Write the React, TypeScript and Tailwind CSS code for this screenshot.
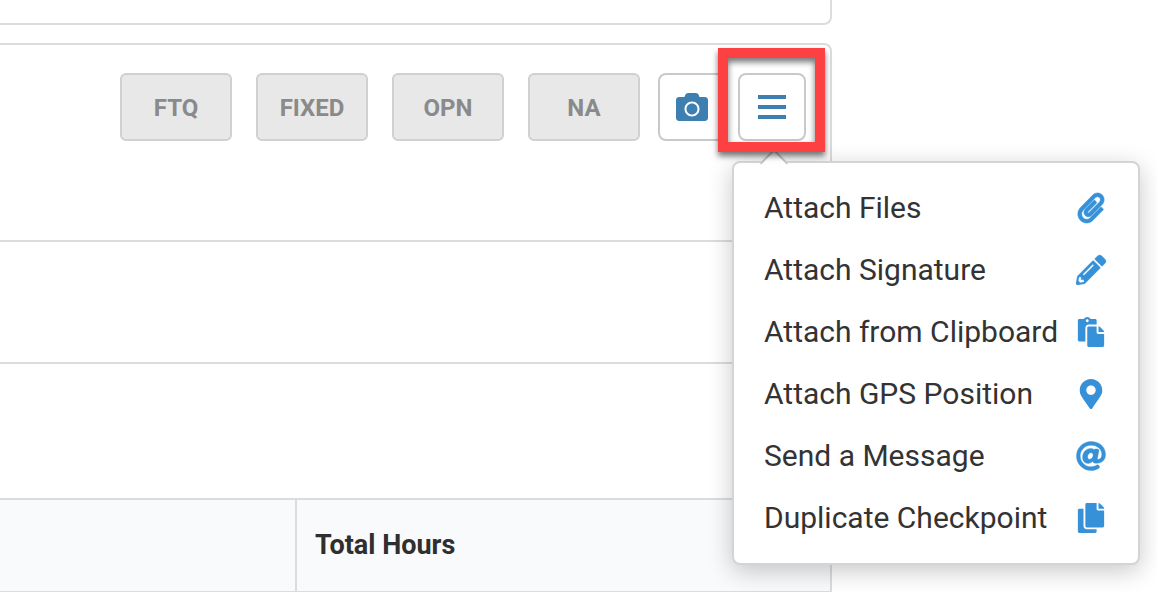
import React, { useState } from 'react';
import type { IconType } from 'react-icons';
import {
  FaAt,
  FaCamera,
  FaCopy,
  FaMapMarkerAlt,
  FaPaperclip,
  FaPaste,
  FaPencilAlt
} from 'react-icons/fa';

interface MenuItem {
  label: string;
  icon: IconType;
  weight: number;
}

const statuses = ['FTQ', 'FIXED', 'OPN', 'NA'];

// weight is the outline added round the glyph, in its own viewBox units
const menuItems: MenuItem[] = [
  { label: 'Attach Files', icon: FaPaperclip, weight: 10 },
  { label: 'Attach Signature', icon: FaPencilAlt, weight: 4 },
  { label: 'Attach from Clipboard', icon: FaPaste, weight: 0 },
  { label: 'Attach GPS Position', icon: FaMapMarkerAlt, weight: 0 },
  { label: 'Send a Message', icon: FaAt, weight: 6 },
  { label: 'Duplicate Checkpoint', icon: FaCopy, weight: 0 }
];

const BarsIcon: React.FC = () => (
  <svg viewBox="0 0 28 24" className="h-6 w-7 text-[#3d7fb0]" fill="currentColor" aria-hidden="true">
    <rect y="0" width="28" height="4" />
    <rect y="10" width="28" height="4" />
    <rect y="20" width="28" height="4" />
  </svg>
);

const ActionsMenu: React.FC = () => (
  <div
    role="menu"
    className="absolute -left-1.5 top-[88px] z-10 w-[408px] rounded-lg border-2 border-[#d3d4d5] bg-white pb-[15px] pt-[13px] shadow-[0_6px_24px_rgba(0,0,0,0.22)]"
  >
    {/* Arrow */}
    <div className="absolute -top-2.5 left-[30px] h-5 w-5 rotate-45 border-l-2 border-t-2 border-[#c4c4c4] bg-white"></div>

    {menuItems.map(({ label, icon: Icon, weight }) => (
      <button
        key={label}
        type="button"
        role="menuitem"
        className="flex h-[62px] w-full items-center justify-between pl-[30px] pr-8 text-[30px] text-[#333333]"
      >
        <span className="whitespace-nowrap">{label}</span>
        <span className="flex w-[30px] justify-center pt-0.5">
          <Icon
            strokeWidth={weight}
            className="h-[30px] w-auto shrink-0 overflow-visible text-[#3691d8]"
          />
        </span>
      </button>
    ))}
  </div>
);

export default function App() {
  const [menuOpen, setMenuOpen] = useState(true);

  return (
    <main className="overflow-hidden bg-white pr-[325px] font-['Roboto',sans-serif]">
      <section className="h-[25px] rounded-br-lg border-b-2 border-r-2 border-[#dcdcdd]"></section>

      <section className="mt-[18px] rounded-tr-lg border-r-2 border-t-2 border-[#dcdcdd]">
        <div className="flex h-[197px] items-start justify-end border-b-2 border-[#dcdcdd] pr-6 pt-7">
          <div className="mr-[18px] flex gap-6">
            {statuses.map(status => (
              <button
                key={status}
                type="button"
                className="h-[68px] w-28 rounded-md border-2 border-[#d0d0d0] bg-[#e8e8e8] pt-0.5 text-2xl font-bold text-[#8a8a8a]"
              >
                {status}
              </button>
            ))}
          </div>

          <button
            type="button"
            aria-label="Take photo"
            className="mr-3 flex h-[68px] w-[68px] items-center justify-center rounded-lg border-2 border-[#c9c9c9] bg-white"
          >
            <FaCamera className="h-8 w-8 text-[#3d7fb0]" />
          </button>

          <div className="relative">
            <button
              type="button"
              aria-label="More actions"
              aria-expanded={menuOpen}
              onClick={() => setMenuOpen(!menuOpen)}
              className="flex h-[68px] w-[68px] items-center justify-center rounded-lg border-2 border-[#c9c9c9] bg-white"
            >
              <BarsIcon />
            </button>

            {menuOpen && <ActionsMenu />}

            {/* Highlight frame */}
            <div className="pointer-events-none absolute -left-5 -top-[25px] z-20 h-[104px] w-[107px] border-10 border-[#fd4042] shadow-[0_4px_6px_rgba(0,0,0,0.55),inset_0_4px_6px_rgba(0,0,0,0.55)]"></div>
          </div>
        </div>

        <div className="h-[122px] border-b-2 border-[#dcdcdd]"></div>
        <div className="h-[134px]"></div>

        <table className="w-full table-fixed border-collapse bg-[#f9fafc] text-[27px] text-[#2f2f2f]">
          <thead>
            <tr className="h-[93px] border-y-2 border-[#dcdcdd]">
              <th className="w-[296px] border-r-2 border-[#dcdcdd]"></th>
              <th scope="col" className="pl-[18px] text-left font-bold">
                Total Hours
              </th>
            </tr>
          </thead>
        </table>
      </section>
    </main>
  );
}
